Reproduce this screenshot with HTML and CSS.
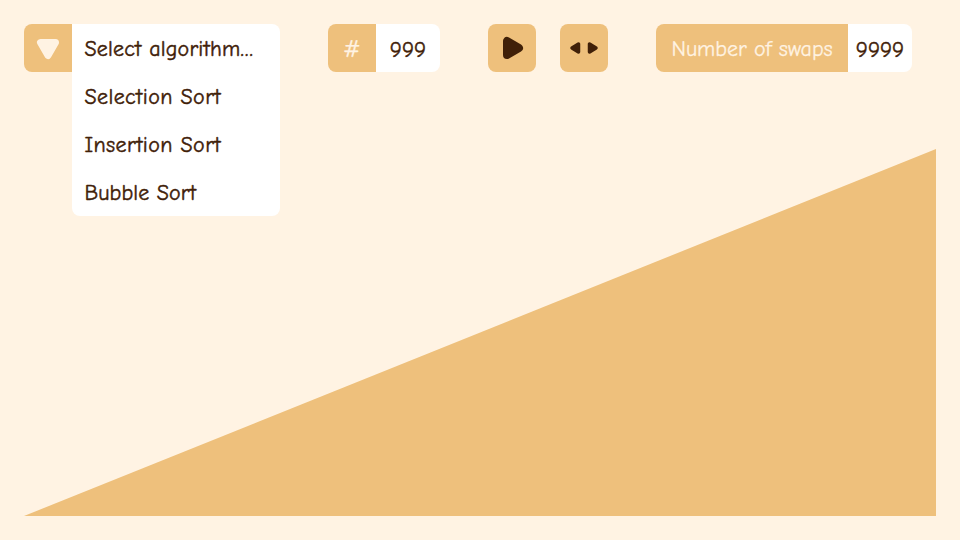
FILE: index.html
```
<!DOCTYPE html>
<html lang="en">
<head>
<meta charset="utf-8">
<title>Sorting</title>
<link rel="stylesheet" href="styles.css">
</head>
<body>
<header class="toolbar">
  <div class="picker">
    <button class="tile tile-left" aria-label="Toggle list"><svg width="48" height="48" viewBox="0 0 48 48"><path class="pale" d="M16.5 18.5H31.5L24 31.5Z"/></svg></button>
    <ul class="options">
      <li class="current">Select algorithm<span class="dots">...</span></li>
      <li>Selection Sort</li>
      <li>Insertion Sort</li>
      <li class="bubble">Bubble Sort</li>
    </ul>
  </div>
  <div class="field size"><span class="tile tile-left hash">#</span><span class="value">999</span></div>
  <button class="tile play" aria-label="Play"><svg width="48" height="48" viewBox="0 0 48 48"><path class="dark" d="M19 17V31L31 24Z"/></svg></button>
  <button class="tile step" aria-label="Step"><svg width="48" height="48" viewBox="0 0 48 48"><path class="dark small" d="M12 24L18.5 20V28ZM36 24L29.5 20V28Z"/></svg></button>
  <div class="field swaps"><span class="tile tile-left label">Number of swaps</span><span class="value">9999</span></div>
</header>
<main class="chart"><svg width="912" height="367" viewBox="0 0 912 367"><path d="M0 367L912 0V367Z"/></svg></main>
</body>
</html>
```
FILE: styles.css
```
* { box-sizing: border-box; }
body { margin: 0; height: 540px; padding: 24px; background: #fff3e3; color: #402008; font: 22px/51px "Comic Neue", "Comic Sans MS", "Comic Relief", cursive; display: flex; flex-direction: column; justify-content: space-between; overflow: hidden; }
.toolbar { display: flex; align-items: flex-start; height: 48px; }
.picker, .field { display: flex; align-items: flex-start; }
.tile { width: 48px; height: 48px; padding: 0; border: 0; border-radius: 8px; background: #eec07c; color: #fff3e3; text-align: center; flex: none; -webkit-text-stroke: 0.25px #fff3e3; }
.tile svg, .chart svg { display: block; }
.tile-left { border-radius: 8px 0 0 8px; }
.options { list-style: none; margin: 0; padding: 0 0 0 12.5px; width: 208px; height: 192px; background: #fff; border-radius: 0 8px 8px 8px; letter-spacing: 0.4px; -webkit-text-stroke: 0.45px #402008; }
.options li { height: 48px; white-space: nowrap; }
.options .current { letter-spacing: 0.2px; }
.options .dots { letter-spacing: 1.2px; }
.options .bubble { letter-spacing: 0.1px; }
.value { width: 64px; height: 48px; background: #fff; border-radius: 0 8px 8px 0; text-align: center; white-space: nowrap; font-size: 22.8px; -webkit-text-stroke: 0.45px #402008; }
.size { margin-left: 48px; }
.hash { font-size: 24px; }
.play { margin-left: 48px; }
.step { margin-left: 24px; }
.swaps { margin-left: 48px; }
.label { width: 192px; white-space: nowrap; letter-spacing: -0.05px; }
.pale { fill: #fff3e3; stroke: #fff3e3; stroke-width: 7px; stroke-linejoin: round; }
.dark { fill: #402008; stroke: #402008; stroke-width: 8px; stroke-linejoin: round; }
.small { stroke-width: 3.5px; }
.chart { fill: #eec07c; }
```
